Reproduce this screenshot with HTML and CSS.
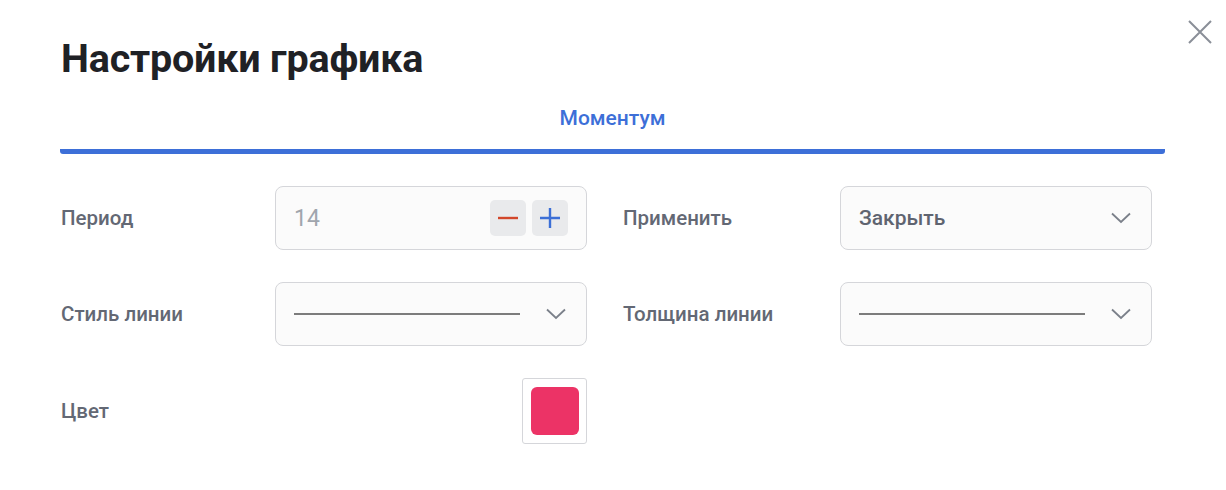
FILE: index.html
```html
<!DOCTYPE html>
<html lang="ru">
<head>
<meta charset="utf-8">
<link rel="stylesheet" href="styles.css">
</head>
<body>
<div class="modal">
  <button class="close" aria-label="Закрыть">
    <svg width="26" height="26" viewBox="0 0 26 26"><path d="M2 2L24 24M24 2L2 24" stroke="#8a8f98" stroke-width="2" fill="none"/></svg>
  </button>
  <h1 class="title">Настройки графика</h1>
  <div class="tabs">
    <div class="tab active">Моментум</div>
  </div>
  <div class="form">
    <div class="label">Период</div>
    <div class="field stepper">
      <span class="num">14</span>
      <div class="btns">
        <button class="sbtn"><svg width="20" height="20" viewBox="0 0 20 20"><path d="M0 10H20" stroke="#d2472b" stroke-width="2.4"/></svg></button>
        <button class="sbtn"><svg width="20" height="20" viewBox="0 0 20 20"><path d="M0 10H20M10 0V20" stroke="#3c6fd6" stroke-width="2.4"/></svg></button>
      </div>
    </div>
    <div class="label">Применить</div>
    <div class="field select">
      <span class="val">Закрыть</span>
      <svg class="chev" width="20" height="12" viewBox="0 0 20 12"><path d="M1 1.5L10 10L19 1.5" stroke="#7b808a" stroke-width="1.8" fill="none"/></svg>
    </div>

    <div class="label">Стиль линии</div>
    <div class="field select">
      <span class="line"></span>
      <svg class="chev" width="20" height="12" viewBox="0 0 20 12"><path d="M1 1.5L10 10L19 1.5" stroke="#7b808a" stroke-width="1.8" fill="none"/></svg>
    </div>
    <div class="label">Толщина линии</div>
    <div class="field select">
      <span class="line"></span>
      <svg class="chev" width="20" height="12" viewBox="0 0 20 12"><path d="M1 1.5L10 10L19 1.5" stroke="#7b808a" stroke-width="1.8" fill="none"/></svg>
    </div>

    <div class="label">Цвет</div>
    <div class="color-cell">
      <div class="swatch-box"><div class="swatch"></div></div>
    </div>
  </div>
</div>
</body>
</html>
```
FILE: styles.css
```css
* { box-sizing: border-box; }
html, body { margin: 0; padding: 0; background: #fff; }
body { font-family: Roboto, "Noto Sans", sans-serif; width: 1226px; height: 490px; overflow: hidden; }
.modal { position: relative; padding: 33px 62px 0 61px; }
.close { position: absolute; top: 19px; right: 13px; border: 0; background: none; padding: 0; width: 26px; height: 26px; cursor: pointer; }
.close svg { display: block; }
.title { margin: 0; font-size: 39.5px; font-weight: 700; color: #1f2125; line-height: 52px; letter-spacing: -0.2px; }
.tabs { display: flex; justify-content: center; margin-top: 21px; border-bottom: 5px solid #3d6fd8; border-radius: 3px; padding-bottom: 19px; margin-left: -1px; margin-right: -1px; }
.tab { font-size: 21px; font-weight: 500; color: #3d6fd8; line-height: 24px; }
.form { display: grid; grid-template-columns: 178px 312px 181px 312px; column-gap: 36px; row-gap: 32px; margin-top: 32px; align-items: center; }
.label { font-size: 20.5px; font-weight: 500; color: #636874; line-height: 24px; }
.field { height: 64px; border: 1px solid #d5d6da; border-radius: 8px; background: #fbfbfb; display: flex; align-items: center; padding: 0 18px; }
.stepper { justify-content: space-between; padding-right: 18px; }
.num { font-size: 23px; color: #a0a5ad; }
.btns { display: flex; gap: 6px; }
.sbtn { width: 36px; height: 36px; border: 0; border-radius: 5px; background: #e9eaec; display: flex; align-items: center; justify-content: center; padding: 0; }
.sbtn svg { display: block; }
.select { justify-content: space-between; padding-right: 20px; }
.val { font-size: 21px; font-weight: 500; color: #5f6470; }
.line { display: block; width: 226px; height: 2px; background: #7c7c7c; }
.chev { display: block; }
.color-cell { display: flex; justify-content: flex-end; }
.swatch-box { width: 65px; height: 66px; border: 1px solid #d5d6da; border-radius: 3px; display: flex; align-items: center; justify-content: center; }
.swatch { width: 48px; height: 48px; border-radius: 6px; background: #ec3366; }
```
